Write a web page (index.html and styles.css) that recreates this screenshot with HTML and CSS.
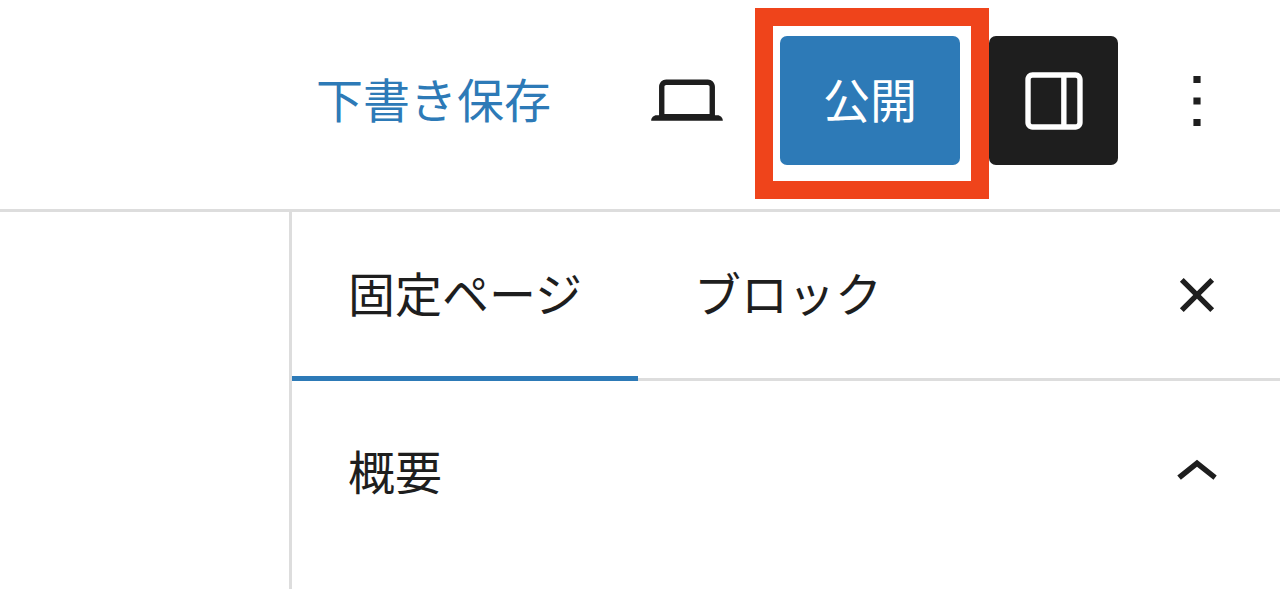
FILE: index.html
```html
<!DOCTYPE html>
<html lang="ja">
<head>
<meta charset="utf-8">
<meta name="viewport" content="width=device-width, initial-scale=1">
<title>固定ページ</title>
<link rel="stylesheet" href="styles.css">
</head>
<body class="editor">
<header class="toolbar">
  <button type="button" class="button button-tertiary">下書き保存</button>
  <button type="button" class="button button-icon" aria-label="プレビュー">
    <svg class="icon" viewBox="0 0 24 24" aria-hidden="true"><path d="M20.5 16h-.7V8c0-1.1-.9-2-2-2H6.2c-1.1 0-2 .9-2 2v8h-.7c-.8 0-1.5.7-1.5 1.5h20c0-.8-.7-1.5-1.5-1.5zM5.7 8c0-.3.2-.5.5-.5h11.6c.3 0 .5.2.5.5v7.6H5.7V8z"/></svg>
  </button>
  <div class="highlight">
    <button type="button" class="button button-primary">公開</button>
  </div>
  <button type="button" class="button button-icon is-pressed" aria-label="設定" aria-pressed="true">
    <svg class="icon" viewBox="0 0 24 24" aria-hidden="true"><path d="M18 4H6c-1.1 0-2 .9-2 2v12c0 1.1.9 2 2 2h12c1.1 0 2-.9 2-2V6c0-1.1-.9-2-2-2zm-4 14.5H6c-.3 0-.5-.2-.5-.5V6c0-.3.2-.5.5-.5h8v13zm4.5-.5c0 .3-.2.5-.5.5h-2.5v-13H18c.3 0 .5.2.5.5v12z"/></svg>
  </button>
  <button type="button" class="button button-more" aria-label="オプション">
    <svg class="icon" viewBox="0 0 24 24" aria-hidden="true"><path d="M13 19h-2v-2h2v2zm0-6h-2v-2h2v2zm0-6h-2V5h2v2z"/></svg>
  </button>
</header>
<div class="body">
  <main class="canvas"></main>
  <aside class="sidebar">
    <div class="tabs">
      <div class="tab-list" role="tablist">
        <button type="button" class="tab is-active" role="tab" aria-selected="true">固定ページ</button>
        <button type="button" class="tab" role="tab" aria-selected="false">ブロック</button>
      </div>
      <button type="button" class="close" aria-label="設定を閉じる">
        <svg class="icon" viewBox="0 0 24 24" aria-hidden="true"><path d="M12 13.06l3.712 3.713 1.061-1.06L13.061 12l3.712-3.712-1.06-1.06L12 10.938 8.288 7.227l-1.061 1.06L10.939 12l-3.712 3.712 1.06 1.061L12 13.061z"/></svg>
      </button>
    </div>
    <button type="button" class="panel-toggle" aria-expanded="true">
      <span class="panel-title">概要</span>
      <svg class="icon" viewBox="0 0 24 24" aria-hidden="true"><path d="M6.5 12.4L12 8l5.5 4.4-.9 1.2L12 10l-4.5 3.6-1-1.2z"/></svg>
    </button>
  </aside>
</div>
</body>
</html>
```

FILE: styles.css
```css
:root {
  --blue: #2d7ab7;
  --ink: #1e1e1e;
  --line: #dddddd;
  --mark: #ef441b;
}

* {
  box-sizing: border-box;
}

.editor {
  margin: 0;
  min-height: 100vh;
  display: flex;
  flex-direction: column;
  background: #fff;
  color: var(--ink);
  font-family: "Noto Sans CJK JP", sans-serif;
  font-size: 47px;
  line-height: 64px;
}

button {
  margin: 0;
  padding: 0;
  border: 0;
  background: none;
  color: inherit;
  font: inherit;
  white-space: nowrap;
  cursor: pointer;
}

.icon {
  display: block;
  flex: none;
  width: 86px;
  height: 86px;
  fill: currentColor;
}

.toolbar {
  display: flex;
  justify-content: flex-end;
  align-items: center;
  gap: 29px;
  padding: 36px 34px 44px;
  border-bottom: 3px solid var(--line);
}

.button {
  display: flex;
  align-items: center;
  justify-content: center;
  height: 129px;
  border-radius: 7px;
}

.button-tertiary {
  padding: 0 42px 6px;
  color: var(--blue);
}

.button-primary {
  padding: 0 43px 6px;
  background: var(--blue);
  color: #fff;
}

.button-icon {
  width: 129px;
}

.button-more {
  width: 99px;
}

.is-pressed {
  background: var(--ink);
  color: #fff;
}

.highlight {
  position: relative;
}

.highlight::after {
  content: "";
  position: absolute;
  inset: -28px -29px -34px -25px;
  border: 18px solid var(--mark);
  pointer-events: none;
}

.body {
  flex: 1;
  display: flex;
}

.canvas {
  flex: 1;
}

.sidebar {
  width: 991px;
  border-left: 3px solid var(--line);
}

.tabs {
  display: flex;
  justify-content: space-between;
  align-items: stretch;
  padding-right: 40px;
  box-shadow: inset 0 -3px var(--line);
}

.tab-list {
  display: flex;
}

.tab {
  height: 169px;
  padding: 0 56px 10px;
}

.close {
  padding-bottom: 3px;
}

.is-active {
  box-shadow: inset 0 -5px var(--blue);
}

.panel-toggle {
  display: flex;
  justify-content: space-between;
  align-items: center;
  width: 100%;
  padding: 50px 40px 50px 56px;
}

.panel-title {
  padding-bottom: 8px;
}
```
